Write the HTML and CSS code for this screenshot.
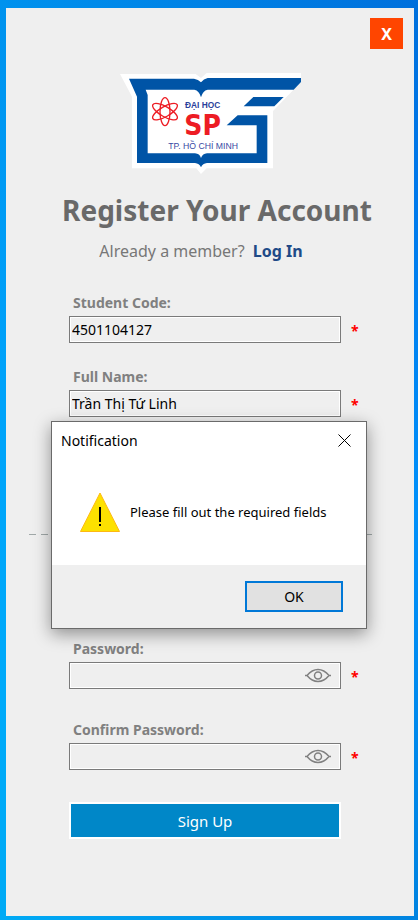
FILE: index.html
```html
<!DOCTYPE html>
<html lang="en">
<head>
<meta charset="utf-8">
<meta name="viewport" content="width=device-width, initial-scale=1">
<title>Register Your Account</title>
<link rel="stylesheet" href="styles.css">
</head>
<body>
<main class="panel">
  <button class="panel-close" type="button">X</button>
  <svg class="logo" viewBox="27 39 543 303" role="img" aria-label="University logo">
    <path fill="#fff" d="M27 42H254L270 54 287 39H570V66L486 153V325H287L270 342 256 325H63V110Z"/>
    <path fill="#0054a6" d="M54 56H249Q262 58 270 67Q278 57 290 54H570V66L548 89H290Q275 92 270 112Q265 92 250 89H104L110 105V280H252Q266 281 270 294Q275 281 288 280H437V196H347L380 166H469V309H288Q275 310 270 322Q265 310 252 309H78V110Z"/>
    <path fill="#0054a6" d="M427 111H518L490 139H398Z"/>
    <g fill="none" stroke="#ed1c24" stroke-width="4">
      <ellipse cx="162" cy="155" rx="15" ry="42"/>
      <ellipse cx="162" cy="155" rx="15" ry="42" transform="rotate(60 162 155)"/>
      <ellipse cx="162" cy="155" rx="15" ry="42" transform="rotate(120 162 155)"/>
    </g>
    <text class="logo-top" x="222" y="143">ĐẠI HỌC</text>
    <text class="logo-mid" x="220" y="226">SP</text>
    <text class="logo-low" x="172" y="267">TP. HỒ CHÍ MINH</text>
  </svg>
  <h1 class="title">Register Your Account</h1>
  <p class="member">Already a member? <a class="login" href="#">Log In</a></p>
  <form class="form">
    <div class="field">
      <label class="label" for="code">Student Code:</label>
      <div class="control"><input class="input" id="code" type="text" value="4501104127"><span class="star">*</span></div>
    </div>
    <div class="field">
      <label class="label" for="name">Full Name:</label>
      <div class="control"><input class="input" id="name" type="text" value="Trần Thị Tứ Linh"><span class="star">*</span></div>
    </div>
    <svg class="divider" height="1" aria-hidden="true"><line x1="0" y1="0.5" x2="100%" y2="0.5"/></svg>
    <div class="field">
      <label class="label" for="password">Password:</label>
      <div class="control">
        <input class="input" id="password" type="password"><span class="star">*</span>
        <button class="eye" type="button" aria-label="Show password"><svg viewBox="0 0 26 16"><path d="M0 7.500H2Q7 1.500 13 1.500T24 7.500H26M2 7.500Q7 13.500 13 13.500T24 7.500"/><circle cx="13" cy="7.500" r="3.500"/></svg></button>
      </div>
    </div>
    <div class="field field-last">
      <label class="label" for="confirm">Confirm Password:</label>
      <div class="control">
        <input class="input" id="confirm" type="password"><span class="star">*</span>
        <button class="eye" type="button" aria-label="Show password"><svg viewBox="0 0 26 16"><path d="M0 7.500H2Q7 1.500 13 1.500T24 7.500H26M2 7.500Q7 13.500 13 13.500T24 7.500"/><circle cx="13" cy="7.500" r="3.500"/></svg></button>
      </div>
    </div>
    <button class="submit" type="button">Sign Up</button>
  </form>
  <section class="dialog" role="dialog" aria-labelledby="dialog-title">
    <header class="dialog-head">
      <h2 class="dialog-title" id="dialog-title">Notification</h2>
      <button class="dialog-close" type="button" aria-label="Close"><svg viewBox="0 0 13 13"><path d="M.5.5l12 12M12.500.5l-12 12"/></svg></button>
    </header>
    <div class="dialog-body">
      <svg class="warning" viewBox="0 0 40 40" aria-hidden="true">
        <path d="M20 1L39.500 39.500H.5Z" fill="#fde100" stroke="#fdb913"/>
        <path d="M19 15h2v15h-2zM19 32h2v2h-2z"/>
      </svg>
      <p class="message">Please fill out the required fields</p>
    </div>
    <footer class="dialog-foot"><button class="ok" type="button">OK</button></footer>
  </section>
</main>
</body>
</html>
```
FILE: styles.css
```css
* { box-sizing: border-box; }

body {
  margin: 0;
  min-height: 100vh;
  display: flex;
  padding: 8px 4px 4px 6px;
  font-family: "Noto Sans", "Open Sans", sans-serif;
  font-size: 14px;
  background:
    linear-gradient(#0070dc, #0078ea 20%, #0090fa 55%, #0083e0) right / 4px 100% no-repeat,
    linear-gradient(#0092ee, #00a2fa 40%, #00aafa 75%, #00aaf5) left / 6px 100% no-repeat,
    linear-gradient(90deg, #0092ee, #0070dc) top / 100% 8px no-repeat,
    linear-gradient(90deg, #00aaf5, #0083e0);
}

h1, h2, p { margin: 0; }

button { font: inherit; padding: 0; border: 0; background: none; }

.panel {
  position: relative;
  flex: 1;
  display: flex;
  flex-direction: column;
  align-items: center;
  padding: 10px 11px;
  background: #efefef;
}

.panel-close {
  align-self: flex-end;
  width: 33px;
  height: 31px;
  background: #ff4500;
  color: #fff;
  font-size: 16px;
  line-height: 30px;
  font-weight: 700;
}

.logo { width: 181px; height: 101px; margin-top: 24px; }
.logo text { font-family: "Liberation Sans", sans-serif; }
.logo-top { font-size: 25px; font-weight: 700; fill: #2b3f9b; }
.logo .logo-mid {
  font-family: "Liberation Sans Narrow", "DejaVu Sans Condensed", sans-serif;
  font-size: 84px;
  font-weight: 700;
  fill: #ed1c24;
}
.logo-low { font-size: 26px; fill: #3949a3; }

.title {
  margin-top: 16px;
  padding-left: 14px;
  font-size: 28px;
  line-height: 40px;
  color: #696969;
  white-space: nowrap;
}

.member {
  margin-top: 9px;
  font-size: 16px;
  line-height: 24px;
  color: #777;
  padding-right: 18px;
}
.login { margin-left: 4px; color: #204a87; font-weight: 700; text-decoration: none; }

.form { align-self: stretch; padding: 0 62px 0 52px; margin-top: 29px; }

.field { margin-bottom: 23px; }
.field-last { margin: 30px 0 32px; }

.label {
  display: block;
  padding-left: 4px;
  margin-bottom: 2px;
  font-size: 14px;
  line-height: 22px;
  font-weight: 700;
  color: #808080;
}

.control { position: relative; }

.input {
  display: block;
  width: 100%;
  height: 27px;
  padding: 0 2px;
  border: 1px solid #7a7a7a;
  box-shadow: inset 0 0 0 1px #fff;
  background: #efefef;
  font: inherit;
  font-size: 14px;
  color: #000;
}

.star {
  position: absolute;
  left: 100%;
  top: 4px;
  margin-left: 10px;
  font-size: 14px;
  line-height: 22px;
  font-weight: 700;
  color: #f00;
}

.eye {
  position: absolute;
  right: 10px;
  top: 6px;
  width: 26px;
  height: 16px;
}
.eye svg { display: block; }
.eye path, .eye circle { fill: none; stroke: #808080; stroke-width: 1.5; }

.divider {
  display: block;
  width: calc(100% + 71px);
  margin: 117px -31px 103px -40px;
}
.divider line { stroke: #a0a8a8; stroke-dasharray: 7 5; }

.submit {
  display: block;
  width: 100%;
  height: 37px;
  border: 2px solid #fff;
  background: #0087c8;
  color: #fff;
  font-size: 15px;
}

.dialog {
  position: absolute;
  top: 413px;
  left: 45px;
  right: 47px;
  border: 1px solid #6a6a6a;
  background: #fff;
  box-shadow: 0 5px 16px rgb(0 0 0 / 40%);
  color: #000;
}

.dialog-head {
  display: flex;
  align-items: center;
  justify-content: space-between;
  height: 37px;
  padding: 0 15px 0 9px;
}
.dialog-title { font-size: 14px; font-weight: 400; }
.dialog-close { width: 13px; height: 13px; }
.dialog-close svg { display: block; }
.dialog-close path { stroke: #000; }

.dialog-body { display: flex; gap: 10px; padding: 33px 28px; }
.warning { width: 40px; height: 40px; flex: none; }
.message { font-size: 13px; line-height: 40px; white-space: nowrap; }

.dialog-foot {
  display: flex;
  justify-content: flex-end;
  padding: 16px 23px;
  background: #efefef;
}
.ok { width: 98px; height: 31px; border: 2px solid #0078d7; background: #e1e1e1; }
```
